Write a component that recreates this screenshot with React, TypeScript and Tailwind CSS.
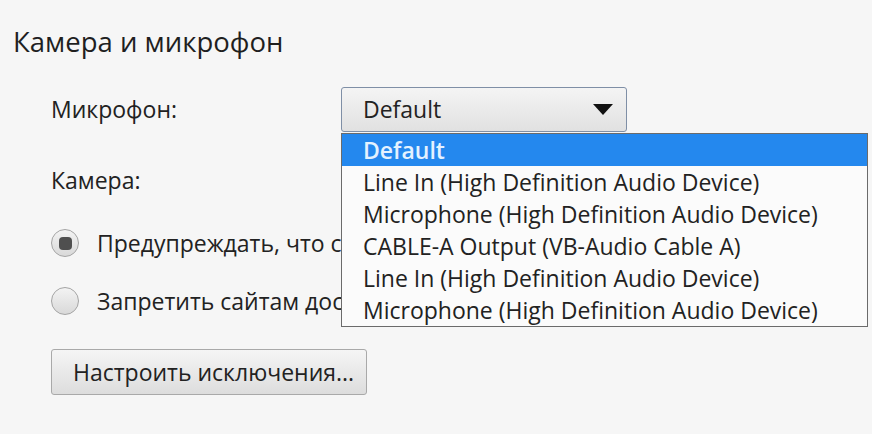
import React from "react";

const options = [
  "Default",
  "Line In (High Definition Audio Device)",
  "Microphone (High Definition Audio Device)",
  "CABLE-A Output (VB-Audio Cable A)",
  "Line In (High Definition Audio Device)",
  "Microphone (High Definition Audio Device)",
];

function Radio({ checked }: { checked?: boolean }) {
  return (
    <span className="flex h-[28px] w-[28px] shrink-0 items-center justify-center rounded-full border border-[#a4a4a4] bg-gradient-to-b from-[#f3f3f3] to-[#d9d9d9]">
      {checked && <span className="h-[13px] w-[13px] rounded-[4px] bg-[#4f4f4f]" />}
    </span>
  );
}

export default function App() {
  return (
    <div
      className="relative h-[434px] w-[872px] overflow-hidden bg-[#f6f6f6] text-[#222]"
      style={{ fontFamily: '"Open Sans", "Noto Sans", sans-serif' }}
    >
      <h2 className="pl-[13px] pt-[24px] text-[27.5px] leading-[36px] text-[#1f1f1f]">
        Камера и микрофон
      </h2>

      <div className="flex flex-col pl-[51px] text-[23px]">
        {/* microphone row; the open list lies over the rows below */}
        <div className="relative z-10 mt-[27px] flex h-[45px] items-center">
          <span className="w-[290px]">Микрофон:</span>
          <div className="relative">
            <div className="flex h-[45px] w-[286px] items-center justify-between rounded-[3px] border border-[#7f8fa6] bg-gradient-to-b from-[#f4f4f4] to-[#e1e1e1] pl-[21px] pr-[13px]">
              <span>Default</span>
              <svg width="20" height="11" viewBox="0 0 20 11">
                <path d="M0 0h20L10 11z" fill="#111" />
              </svg>
            </div>
            <ul className="absolute left-0 top-[46px] w-[527px] border border-[#6b6b6b] bg-[#fbfbfb]">
              {options.map((o, i) => (
                <li
                  key={i}
                  className={
                    i === 0
                      ? "flex h-[32px] items-center bg-[#2488ee] pl-[21px] font-semibold text-[#e4f2ff]"
                      : "flex h-[32px] items-center pl-[21px]"
                  }
                >
                  {o}
                </li>
              ))}
            </ul>
          </div>
        </div>

        <div className="mt-[33px] flex h-[30px] items-center">Камера:</div>

        <label className="mt-[33px] flex h-[30px] items-center gap-[18px] whitespace-nowrap">
          <Radio checked />
          <span>Предупреждать, что сайт запрашивает доступ</span>
        </label>

        <label className="mt-[28px] flex h-[30px] items-center gap-[18px] whitespace-nowrap">
          <Radio />
          <span>Запретить сайтам доступ к камере и микрофону</span>
        </label>

        <div className="mt-[33px]">
          <button className="flex h-[46px] w-[316px] items-center rounded-[3px] border border-[#a9a9a9] bg-gradient-to-b from-[#f5f5f5] to-[#dddddd] pl-[21px] text-[#222]">
            Настроить исключения...
          </button>
        </div>
      </div>
    </div>
  );
}
